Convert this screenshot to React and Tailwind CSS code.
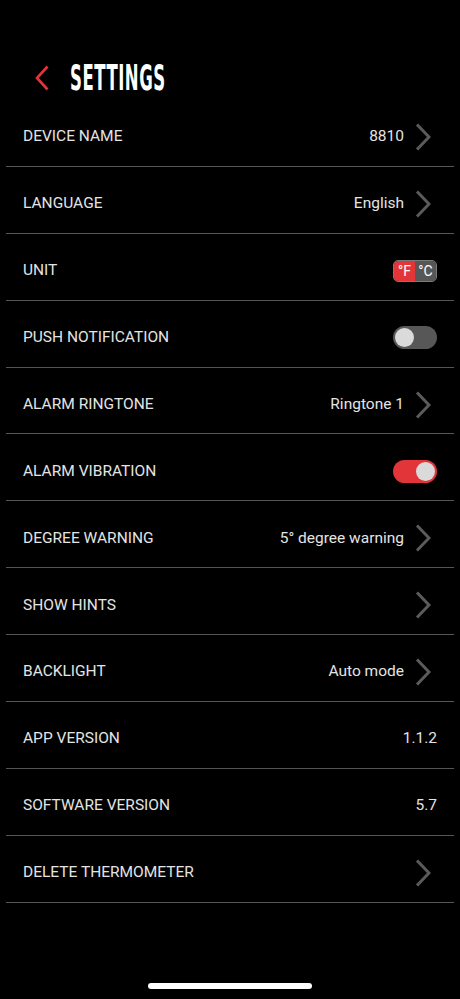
import React from "react";

const Chevron = () => (
  <svg width="16" height="28" viewBox="0 0 16 28" className="shrink-0">
    <path d="M2 1.5 L14 14 L2 26.5" fill="none" stroke="#5b5b5b" strokeWidth="3" />
  </svg>
);

const Toggle = ({ on }) => (
  <div
    className={`w-[44px] h-[23px] rounded-full flex items-center px-[2px] ${
      on ? "bg-[#e2353a] justify-end" : "bg-[#575757] justify-start"
    }`}
  >
    <div className="w-[19px] h-[19px] rounded-full bg-[#dadada]" />
  </div>
);

const Unit = () => (
  <div className="flex w-[44px] h-[22px] rounded-[5px] border-[1.5px] border-[#7a7a7a] overflow-hidden text-[14px] leading-none text-white">
    <div className="flex-1 bg-[#e2353a] flex items-center justify-center">°F</div>
    <div className="flex-1 bg-[#575757] flex items-center justify-center">°C</div>
  </div>
);

const rows = [
  { label: "DEVICE NAME", value: "8810", chevron: true },
  { label: "LANGUAGE", value: "English", chevron: true },
  { label: "UNIT", custom: <Unit /> },
  { label: "PUSH NOTIFICATION", custom: <Toggle on={false} /> },
  { label: "ALARM RINGTONE", value: "Ringtone 1", chevron: true },
  { label: "ALARM VIBRATION", custom: <Toggle on={true} /> },
  { label: "DEGREE WARNING", value: "5° degree warning", chevron: true },
  { label: "SHOW HINTS", chevron: true },
  { label: "BACKLIGHT", value: "Auto mode", chevron: true },
  { label: "APP VERSION", value: "1.1.2" },
  { label: "SOFTWARE VERSION", value: "5.7" },
  { label: "DELETE THERMOMETER", chevron: true },
];

export default function App() {
  return (
    <div
      className="w-[460px] h-[999px] bg-black text-[#e4e4e4] flex flex-col relative overflow-hidden"
      style={{ fontFamily: "Roboto, 'Noto Sans', sans-serif" }}
    >
      <div className="h-[100px] flex items-center pl-[34px] pt-[56px]">
        <svg width="16" height="26" viewBox="0 0 16 26" className="shrink-0">
          <path d="M13.5 1.5 L3 13 L13.5 24.5" fill="none" stroke="#e2353a" strokeWidth="2.6" />
        </svg>
        <div
          className="ml-[20px] text-white font-bold text-[36px] leading-none origin-left scale-x-[0.51] tracking-[1px] whitespace-nowrap"
          style={{ fontFamily: "'DejaVu Sans Condensed', 'DejaVu Sans', sans-serif" }}
        >
          SETTINGS
        </div>
      </div>
      <div className="flex flex-col px-[6px]">
        {rows.map((r, i) => (
          <div key={i} className="h-[66.9px] pt-[8px] flex items-center border-b-[1.5px] border-[#555555]">
            <div className="pl-[17px] text-[15.5px] flex-1">{r.label}</div>
            <div className="flex items-center pr-[17px]">
              {r.custom}
              {r.value && <span className="text-[15.5px]">{r.value}</span>}
              {r.chevron && <span className="ml-[11px] mr-[6px] flex"><Chevron /></span>}
            </div>
          </div>
        ))}
      </div>
      <div className="absolute left-[148px] top-[983px] w-[164px] h-[6px] rounded-full bg-white" />
    </div>
  );
}
